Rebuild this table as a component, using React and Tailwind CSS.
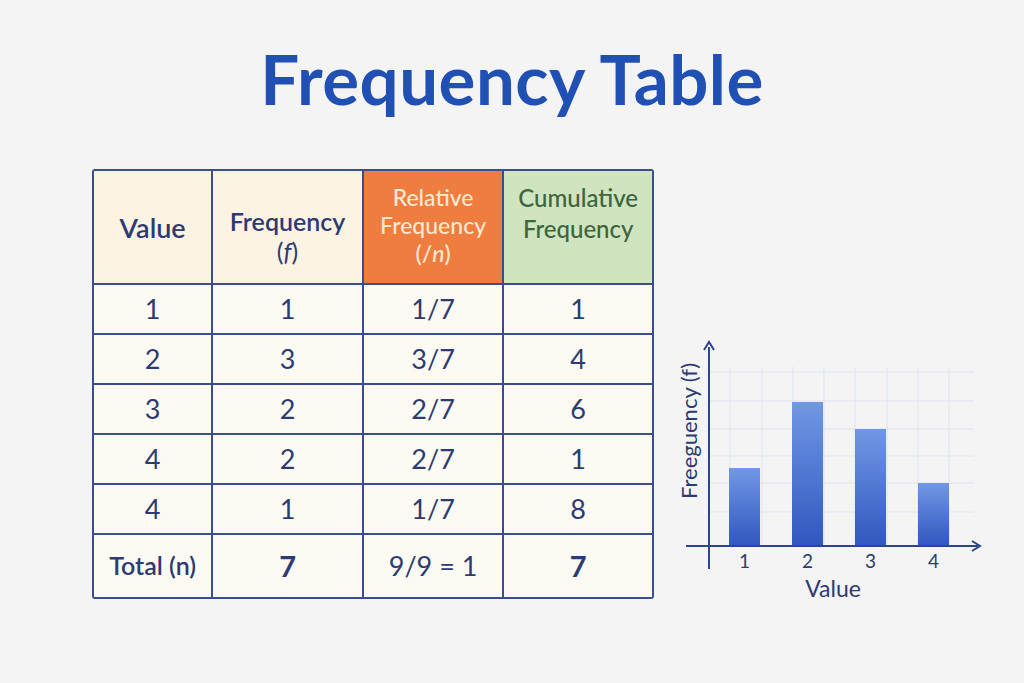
export default function App() {
  const rows = [
    ["1", "1", "1/7", "1"],
    ["2", "3", "3/7", "4"],
    ["3", "2", "2/7", "6"],
    ["4", "2", "2/7", "1"],
    ["4", "1", "1/7", "8"],
  ];
  const bars = [
    { x: 53, top: 131, label: "1" },
    { x: 116, top: 65, label: "2" },
    { x: 179, top: 92, label: "3" },
    { x: 242, top: 146, label: "4" },
  ];
  const vLines = [54, 86, 117, 148, 179, 211, 242, 273];
  const hLines = [35, 64, 92, 119, 146, 175];

  return (
    <div
      className="w-[1024px] h-[683px] bg-[#f4f4f4] flex flex-col overflow-hidden"
      style={{ fontFamily: "Lato, 'Open Sans', sans-serif" }}
    >
      <h1 className="text-center text-[69px] leading-none font-bold text-[#2150b4] pt-[44px] tracking-[0.5px]">
        Frequency Table
      </h1>

      <div className="flex pl-[92px] pt-[56px]">
        {/* Table */}
        <table className="border-separate border-spacing-0 text-[#2c3b72] rounded-[3px] overflow-hidden border-2 border-[#3b4d8f] w-[562px] h-[428px]">
          <colgroup>
            <col className="w-[120px]" />
            <col className="w-[151px]" />
            <col className="w-[141px]" />
            <col className="w-[148px]" />
          </colgroup>
          <thead>
            <tr className="h-[114px]">
              <th className="bg-[#fdf3e2] border-r-2 border-b-2 border-[#3b4d8f] text-[27px] font-semibold align-middle pt-[2px]">
                Value
              </th>
              <th className="bg-[#fdf3e2] border-r-2 border-b-2 border-[#3b4d8f] text-[25px] font-semibold leading-[30px] align-middle pt-[18px]">
                Frequency
                <br />
                <span className="font-normal">
                  (<i>f</i>)
                </span>
              </th>
              <th className="bg-[#ee7d3f] border-r-2 border-b-2 border-[#3b4d8f] text-[23px] font-medium leading-[28px] text-[#fde8d2] align-middle pb-[4px]">
                Relative
                <br />
                Frequency
                <br />
                (/<i>n</i>)
              </th>
              <th className="bg-[#cfe4bf] border-b-2 border-[#3b4d8f] text-[24px] font-medium leading-[31px] text-[#3c6540] align-top pt-[11px]">
                Cumulative
                <br />
                Frequency
              </th>
            </tr>
          </thead>
          <tbody className="bg-[#fdfaf4]">
            {rows.map((r, i) => (
              <tr key={i} className="h-[50px]">
                {r.map((c, j) => (
                  <td
                    key={j}
                    className={`text-center text-[27px] border-b-2 border-[#3b4d8f] ${
                      j < 3 ? "border-r-2" : ""
                    }`}
                  >
                    {c}
                  </td>
                ))}
              </tr>
            ))}
            <tr className="h-[62px]">
              <td className="text-center text-[25px] font-semibold border-r-2 border-[#3b4d8f]">
                Total (n)
              </td>
              <td className="text-center text-[29px] font-bold border-r-2 border-[#3b4d8f]">
                7
              </td>
              <td className="text-center text-[27px] border-r-2 border-[#3b4d8f]">
                9/9 = 1
              </td>
              <td className="text-center text-[29px] font-bold">7</td>
            </tr>
          </tbody>
        </table>

        {/* Chart */}
        <svg
          width="310"
          height="270"
          viewBox="0 0 310 270"
          className="ml-[22px] mt-[168px]"
          style={{ fontFamily: "Lato, 'Open Sans', sans-serif" }}
        >
          <defs>
            <linearGradient id="bar" x1="0" y1="0" x2="0" y2="1">
              <stop offset="0%" stopColor="#7198e4" />
              <stop offset="100%" stopColor="#2f57bf" />
            </linearGradient>
          </defs>
          {vLines.map((x) => (
            <line key={x} x1={x} y1={30} x2={x} y2={209} stroke="#dde3ee" strokeWidth="1" />
          ))}
          {hLines.map((y) => (
            <line key={y} x1={33} y1={y} x2={298} y2={y} stroke="#dde3ee" strokeWidth="1" />
          ))}
          {bars.map((b) => (
            <g key={b.label}>
              <rect x={b.x} y={b.top} width={31} height={209 - b.top} fill="url(#bar)" />
              <text x={b.x + 15.5} y={231} textAnchor="middle" fontSize="19" fill="#2c3b72">
                {b.label}
              </text>
            </g>
          ))}
          <line x1={33} y1={10} x2={33} y2={232} stroke="#2d4590" strokeWidth="2" />
          <path d="M28 13 L33 5 L38 13" fill="none" stroke="#2d4590" strokeWidth="2" />
          <line x1={10} y1={209} x2={302} y2={209} stroke="#2d4590" strokeWidth="2" />
          <path d="M296 204 L304 209 L296 214" fill="none" stroke="#2d4590" strokeWidth="2" />
          <text x={157} y={260} textAnchor="middle" fontSize="23" fill="#2c3b72">
            Value
          </text>
          <text
            x={0}
            y={0}
            transform="translate(21 94) rotate(-90)"
            textAnchor="middle"
            fontSize="22"
            fill="#2c3b72"
          >
            Freeguency (f)
          </text>
        </svg>
      </div>
    </div>
  );
}
